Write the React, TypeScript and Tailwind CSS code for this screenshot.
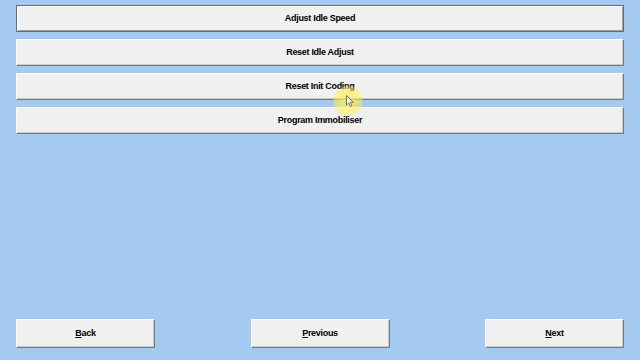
import React from "react";

const font = { fontFamily: '"Liberation Sans", Arial, sans-serif' };

function WinButton({
  children,
  focused = false,
  className = "",
}: {
  children: React.ReactNode;
  focused?: boolean;
  className?: string;
}) {
  return (
    <button
      className={
        "flex items-center justify-center bg-[#f0f0f0] text-[9px] font-bold tracking-[-0.3px] text-black " +
        (focused
          ? "border border-[#6b6b6b] shadow-[inset_1px_1px_0_#ffffff,inset_-1px_-1px_0_#a0a0a0] "
          : "border border-t-white border-l-white border-r-[#7a7a7a] border-b-[#7a7a7a] shadow-[inset_-1px_-1px_0_#c8c8c8] ") +
        className
      }
      style={font}
    >
      {children}
    </button>
  );
}

export default function App() {
  const actions = ["Adjust Idle Speed", "Reset Idle Adjust", "Reset Init Coding", "Program Immobiliser"];

  return (
    <div className="relative w-[640px] h-[360px] bg-[#a5caf2] flex flex-col px-[16px] pt-[5px] pb-[12px] overflow-hidden">
      <div className="flex flex-col gap-[7px]">
        {actions.map((a, i) => (
          <WinButton key={a} focused={i === 0} className="h-[27px] w-full">
            {a}
          </WinButton>
        ))}
      </div>

      <div className="mt-auto flex justify-between">
        <WinButton className="h-[29px] w-[139px] pt-[1px]">
          <span>
            <span className="underline">B</span>ack
          </span>
        </WinButton>
        <WinButton className="h-[29px] w-[139px] pt-[1px]">
          <span>
            <span className="underline">P</span>revious
          </span>
        </WinButton>
        <WinButton className="h-[29px] w-[139px] pt-[1px]">
          <span>
            <span className="underline">N</span>ext
          </span>
        </WinButton>
      </div>

      {/* cursor highlight */}
      <div className="absolute left-[333px] top-[86px] w-[30px] h-[30px] rounded-full bg-[radial-gradient(circle,rgba(255,240,80,0.85)_0%,rgba(255,240,80,0.55)_55%,rgba(255,240,80,0)_100%)] pointer-events-none" />
      <svg className="absolute left-[346px] top-[95px] pointer-events-none" width="8" height="12" viewBox="0 0 8 12">
        <path d="M0.5 0.5 L0.5 10 L2.8 7.8 L4.4 11.3 L5.8 10.6 L4.3 7.3 L7.3 7.3 Z" fill="#ffffff" stroke="#555555" strokeWidth="0.8" />
      </svg>
    </div>
  );
}
